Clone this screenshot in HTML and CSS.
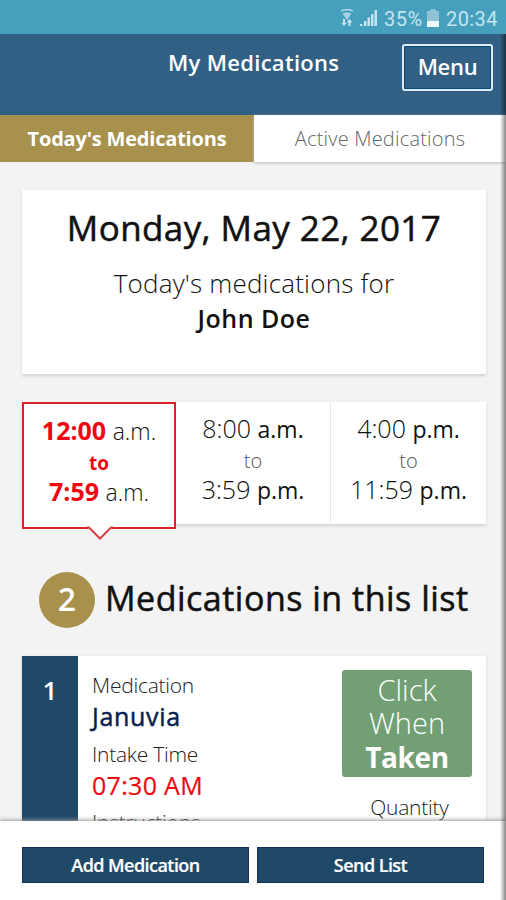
FILE: index.html
```html
<!DOCTYPE html>
<html lang="en">
<head>
<meta charset="utf-8">
<title>My Medications</title>
<link rel="stylesheet" href="styles.css">
</head>
<body>
<div class="app">
  <div class="status">
    <svg class="wifi" width="14" height="18" viewBox="0 0 14 18"><path d="M1 2Q7-.6 13 2" fill="none" stroke="currentColor" stroke-width="1.300"/><path d="M2.500 4.500Q7 2.500 11.500 4.500L7 11z" fill="currentColor" opacity=".75"/><path d="M4 17 1.300 14H3V10H5V14H6.700zM9.500 10 12.300 13.500H10.500V17H8.500V13.500H6.700z" fill="currentColor"/></svg>
    <svg class="signal" width="18" height="18" viewBox="0 0 18 18" fill="currentColor"><path d="M0 15h2.500v2H0zM4 12h2.500v5H4zM7.500 8.500H10V17H7.500zM11 5h2.500v12H11zM14.500 1H17v16h-2.500z"/></svg>
    <span class="percent">35%</span>
    <svg class="battery" width="12" height="18" viewBox="0 0 12 18"><path d="M3.500 0h5v2H12v16H0V2h3.500z" fill="#8fc4d6"/><path d="M0 12h12v6H0z" fill="#edf8fb"/></svg>
    <span class="clock">20:34</span>
  </div>
  <header class="header">
    <h1 class="title">My Medications</h1>
    <button class="menu">Menu</button>
  </header>
  <nav class="tabs">
    <div class="tab tab-on"><span>Today's Medications</span></div>
    <div class="tab tab-off"><span>Active Medications</span></div>
  </nav>
  <main class="content">
    <section class="day">
      <h2 class="date">Monday, May 22, 2017</h2>
      <p class="for">Today's medications for</p>
      <p class="name">John Doe</p>
    </section>
    <section class="slots">
      <div class="slot slot-on">
        <p class="time"><b>12:00</b> <span>a.m.</span></p><p class="to">to</p><p class="time"><b>7:59</b> <span>a.m.</span></p>
        <svg class="pointer" width="26" height="15" viewBox="0 0 26 15"><path d="M1 0H25V2L13 13 1 2z" fill="#fff"/><path d="M0 1.500H2L13 12.500 24 1.500h2" fill="none" stroke="#d83b42" stroke-width="2"/></svg>
      </div>
      <div class="slot"><p class="time">8:00 <span>a.m.</span></p><p class="to">to</p><p class="time">3:59 <span>p.m.</span></p></div>
      <div class="slot"><p class="time">4:00 <span>p.m.</span></p><p class="to">to</p><p class="time">11:59 <span>p.m.</span></p></div>
    </section>
    <section class="count"><span class="badge">2</span><h2 class="heading">Medications in this list</h2></section>
    <section class="card">
      <div class="index">1</div>
      <div class="details">
        <p class="label">Medication</p><p class="drug">Januvia</p>
        <p class="label intake">Intake Time</p><p class="when">07:30 AM</p>
        <p class="label instructions">Instructions</p>
      </div>
      <div class="actions">
        <button class="take">Click<br>When<br><b>Taken</b></button>
        <p class="label quantity">Quantity</p>
      </div>
    </section>
  </main>
  <footer class="footer"><button class="add">Add Medication</button><button class="send">Send List</button></footer>
  <div class="edge"></div>
</div>
</body>
</html>
```
FILE: styles.css
```css
* { box-sizing: border-box; }
body, h1, h2, p { margin: 0; }
button { font: inherit; border: 0; padding: 0; color: #fff; }
body { font-family: "Open Sans", sans-serif; color: #111; overflow: hidden; }
.app { position: relative; width: 506px; height: 900px; display: flex; flex-direction: column; overflow: hidden; background: #f3f3f3; white-space: nowrap; }
.status { height: 34px; flex: none; display: flex; align-items: flex-start; padding-top: 9px; padding-left: 340px; background: #479fbe; color: #c5e5ef; font: 20px/20px Roboto, sans-serif; }
.signal { margin-left: 6px; }
.percent { margin-left: 6px; width: 43px; letter-spacing: .5px; }
.clock { margin-left: 7px; letter-spacing: .4px; }
.header { height: 81px; flex: none; display: flex; background: #316084; color: #fff; font-size: 22px; font-weight: 600; }
.title { margin: 14px 0 0 168px; width: 234px; font-size: 22px; line-height: 28px; font-weight: 600; letter-spacing: .3px; }
.menu { margin-top: 10px; width: 91px; height: 47px; border: 2px solid #dcecf7; border-radius: 3px; background: transparent; line-height: 40px; padding-bottom: 3px; letter-spacing: -.3px; outline: 1px solid #064a78; outline-offset: -3px; }
.tabs { height: 47px; flex: none; display: flex; font-size: 20px; line-height: 47px; text-align: center; }
.tab-on { width: 254px; background: #a7914d; color: #fff; font-weight: 700; letter-spacing: -.2px; }
.tab-off { width: 252px; background: #fff; color: #666; font-weight: 300; letter-spacing: .2px; box-shadow: 0 1px 3px #bbb; }
.content { height: 659px; padding: 28px 20px 0 22px; overflow: hidden; }
.day { height: 184px; padding-top: 15px; text-align: center; background: #fff; box-shadow: 0 2px 3px #d2d2d2; }
.date { font-size: 35px; line-height: 45px; font-weight: 400; letter-spacing: .4px; -webkit-text-stroke: .5px; }
.for { margin-top: 16px; font-size: 26px; line-height: 35px; font-weight: 300; letter-spacing: .2px; }
.name { font-size: 25px; line-height: 35px; font-weight: 600; letter-spacing: .5px; }
.slots { display: grid; grid-template-columns: 154px 155px 155px; height: 122px; margin-top: 28px; background: #fff; box-shadow: 0 2px 3px #d2d2d2; }
.slot { padding-top: 11px; text-align: center; border-right: 1px solid #e8e8e8; font-weight: 300; }
.slot:last-child { border: 0; }
.slot-on { position: relative; height: 127px; border: 2px solid #db2229; background: #fff; }
.time { font-size: 25px; line-height: 30px; }
.time span { font-size: 23px; font-weight: 400; }
.to { font-size: 20px; line-height: 30px; color: #555; position: relative; top: 2px; }
.slot-on .time span { font-weight: 300; }
.slot-on b, .slot-on .to { color: #ee0710; font-weight: 700; }
.slot-on .to { font-size: 19px; }
.pointer { position: absolute; left: 63px; top: 122px; }
.count { display: flex; height: 56px; margin: 48px 0 0 17px; }
.badge { width: 56px; height: 56px; border-radius: 50%; background: #a7914d; color: #fff; text-align: center; font-size: 32px; line-height: 54px; font-weight: 600; }
.heading { margin-left: 10px; font-size: 34px; line-height: 53px; font-weight: 400; letter-spacing: .5px; -webkit-text-stroke: .5px; }
.card { display: flex; height: 220px; margin-top: 28px; background: #fff; box-shadow: 0 1px 3px #d2d2d2; }
.index { width: 56px; padding-top: 18px; background: #204968; color: #fff; font-size: 26px; line-height: 32px; font-weight: 600; text-align: center; }
.details { width: 264px; padding: 14px 0 0 14px; }
.label { font-size: 21px; line-height: 30px; font-weight: 300; color: #222; letter-spacing: -.25px; }
.drug { font-size: 25px; line-height: 32px; color: #071f50; letter-spacing: .7px; -webkit-text-stroke: .5px; }
.intake { margin-top: 7px; }
.when { font-size: 25px; line-height: 32px; color: #ee0710; letter-spacing: .3px; -webkit-text-stroke: .2px; }
.instructions { margin-top: 6px; }
.actions { width: 130px; padding-top: 14px; text-align: center; }
.take { display: block; width: 130px; height: 107px; padding-bottom: 1px; border-radius: 3px; background: #729f74; font-size: 29px; line-height: 33.5px; font-weight: 300; }
.take b { font-weight: 700; font-size: 28px; letter-spacing: -.4px; line-height: 33px; }
.quantity { margin-top: 15px; padding-left: 5px; }
.footer { position: relative; height: 79px; flex: none; display: flex; gap: 8px; padding: 26px 22px 0; background: #fff; box-shadow: 0 -1px 4px #999; }
.footer button { width: 227px; height: 36px; border: 1px solid #103258; background: #204968; font-size: 18px; line-height: 32px; font-weight: 600; letter-spacing: -.55px; -webkit-text-stroke: .2px; }
.edge { position: absolute; right: 0; top: 34px; width: 6px; height: 866px; background: linear-gradient(to right, transparent, rgba(0,0,0,.48)); }
```
